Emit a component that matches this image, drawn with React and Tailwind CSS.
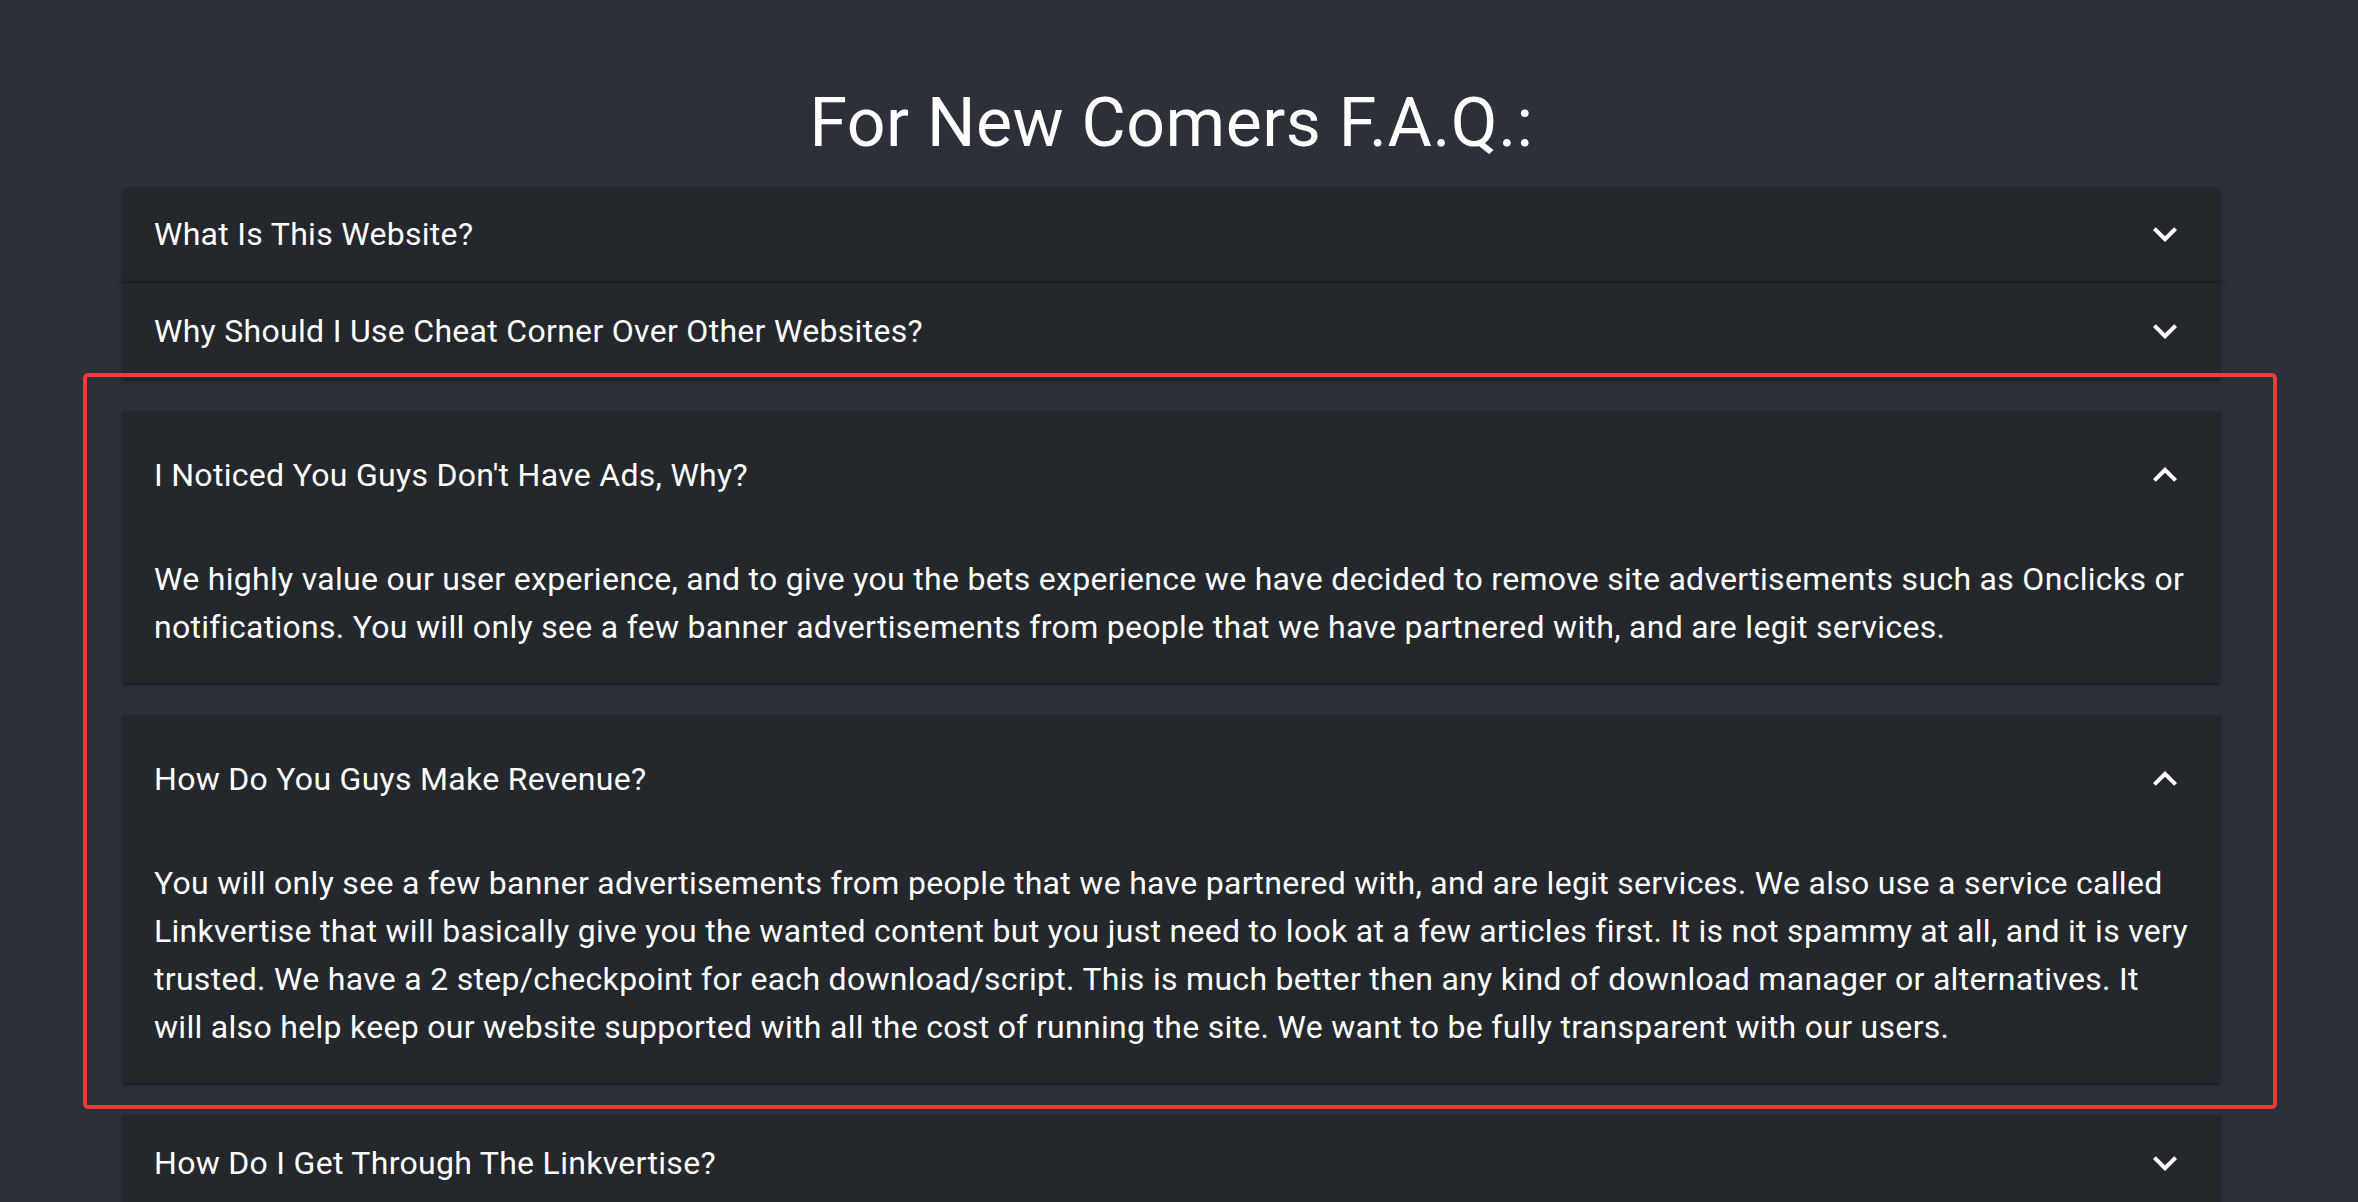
import React, { useState } from "react";

const faqs = [
  {
    q: "What Is This Website?",
    a: "Cheat Corner is a place to find scripts and downloads for your favourite games.",
  },
  {
    q: "Why Should I Use Cheat Corner Over Other Websites?",
    a: "We keep everything up to date and only list content we have checked ourselves.",
  },
  {
    q: "I Noticed You Guys Don't Have Ads, Why?",
    a: "We highly value our user experience, and to give you the bets experience we have decided to remove site advertisements such as Onclicks or notifications. You will only see a few banner advertisements from people that we have partnered with, and are legit services.",
  },
  {
    q: "How Do You Guys Make Revenue?",
    a: "You will only see a few banner advertisements from people that we have partnered with, and are legit services. We also use a service called Linkvertise that will basically give you the wanted content but you just need to look at a few articles first. It is not spammy at all, and it is very trusted. We have a 2 step/checkpoint for each download/script. This is much better then any kind of download manager or alternatives. It will also help keep our website supported with all the cost of running the site. We want to be fully transparent with our users.",
  },
  {
    q: "How Do I Get Through The Linkvertise?",
    a: "Click the button, look at a few articles, and you will be sent on to the download.",
  },
];

const Chevron = ({ up }) => (
  <svg
    viewBox="0 0 24 24"
    className={"w-[48px] h-[48px] fill-white " + (up ? "rotate-180" : "")}
  >
    <path d="M16.59 8.59 12 13.17 7.41 8.59 6 10l6 6 6-6z" />
  </svg>
);

const App = () => {
  const [open, setOpen] = useState({ 2: true, 3: true });

  const toggle = (i) => setOpen({ ...open, [i]: !open[i] });

  return (
    <div className="min-h-screen bg-[#2c3039] text-white font-['Roboto',sans-serif]">
      <div className="w-[2343px] px-[122px] pt-[81px]">
        <h1 className="text-center text-[68px] leading-[84px] tracking-[0.5px] mb-[22px]">
          For New Comers F.A.Q.:
        </h1>

        {/* FAQ list */}
        <div className="relative">
          {faqs.map((f, i) => {
            const isOpen = !!open[i];
            const prevOpen = i > 0 && !!open[i - 1];
            return (
              <div
                key={i}
                className={
                  "bg-[#24272b] shadow-[0_4px_2px_-2px_rgba(0,0,0,0.2),0_2px_2px_0_rgba(0,0,0,0.14),0_2px_6px_0_rgba(0,0,0,0.12)] " +
                  (i === 0 ? "rounded-t-[8px] " : "") +
                  (isOpen ? "my-[32px] " : "") +
                  (isOpen && i === 0 ? "mt-0 " : "") +
                  (!isOpen && prevOpen ? "mt-[32px] " : "") +
                  (i > 0 && !isOpen && !prevOpen ? "border-t-2 border-[#1d2023] " : "")
                }
              >
                <button
                  onClick={() => toggle(i)}
                  className={
                    "w-full flex items-center justify-between px-[32px] text-left " +
                    (isOpen ? "h-[128px]" : i === 0 ? "h-[94px]" : "h-[96px]")
                  }
                >
                  <span className="text-[32px] leading-[48px] tracking-[0.3px]">
                    {f.q}
                  </span>
                  <Chevron up={isOpen} />
                </button>
                {isOpen && (
                  <div className="px-[32px] pt-[16px] pb-[32px]">
                    <p className="text-[32px] leading-[48px] tracking-[0.3px]">
                      {f.a}
                    </p>
                  </div>
                )}
              </div>
            );
          })}

          {/* highlight box */}
          <div className="absolute left-[-39px] top-[186px] w-[2194px] h-[736px] border-4 border-[#ef3a3a] rounded-[5px] pointer-events-none" />
        </div>
      </div>
    </div>
  );
};

export default App;
